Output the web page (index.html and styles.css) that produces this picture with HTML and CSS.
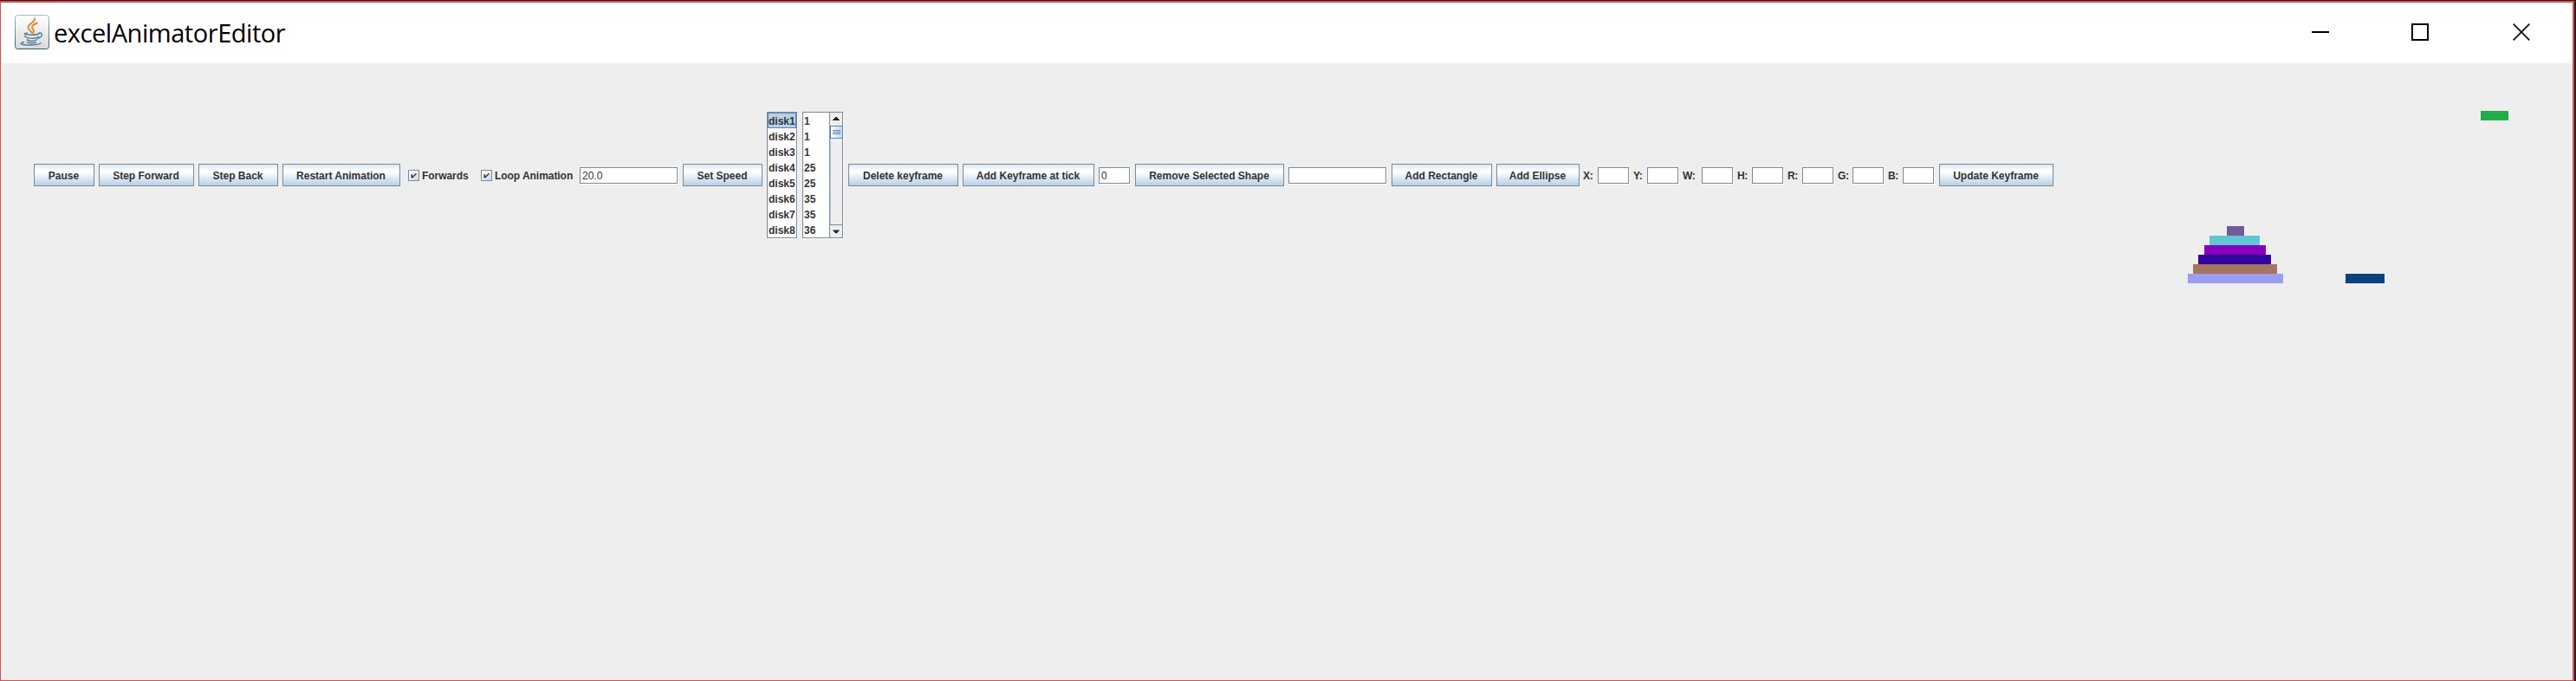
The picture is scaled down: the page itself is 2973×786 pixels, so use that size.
FILE: index.html
```
<!DOCTYPE html>
<html lang="en">
<head>
<meta charset="utf-8">
<title>excelAnimatorEditor</title>
<link rel="stylesheet" href="styles.css">
</head>
<body>
<div class="window">
  <header class="titlebar">
    <svg class="logo" width="40" height="40" viewBox="0 0 40 40" fill="none">
      <defs><linearGradient id="lg" x1="0" y1="0" x2="0" y2="1"><stop offset="0" stop-color="#fff"/><stop offset="1" stop-color="#d9dadb"/></linearGradient>
      <linearGradient id="ls" x1="0" y1="0" x2="0" y2="1"><stop offset="0" stop-color="#a3b8c8"/><stop offset="1" stop-color="#37596f"/></linearGradient></defs>
      <rect x=".5" y=".5" width="39" height="39" rx="3" fill="url(#lg)" stroke="url(#ls)"/>
      <path d="M23 3.500c2 5-8 7-7.500 11 .3 3 3.500 4 4.500 7M26.500 9.500c-7 2-7.500 4.500-5.500 7 1.500 2 1 3.500 0 5" stroke="#e8862e" stroke-width="1.900"/>
      <path d="M15 21c-6 1-5 2.200 4 2.200 5 0 8-.6 9-1.200M11.500 24c0 4 15 4 16 1M14 28.500c2 2.500 9 2.500 12 0M27 21.500c6-2 6 4-1 6M11 31.500c-8 2-2 3.500 6 3.500 8 0 13-1 13-3M14 32c3 .8 8 .8 11 0" stroke="#5b7f9b" stroke-width="1.500"/>
    </svg>
    <h1 class="title">excelAnimatorEditor</h1>
    <div class="controls">
      <svg width="20" height="20" viewBox="0 0 20 20"><path d="M0 10h20" stroke="#000" stroke-width="2"/></svg>
      <svg width="20" height="20" viewBox="0 0 20 20"><rect x="1" y="1" width="18" height="18" fill="none" stroke="#000" stroke-width="2"/></svg>
      <svg class="close" width="20" height="20" viewBox="0 0 20 20"><path d="M.7.7l18.600 18.600M19.300.7L.7 19.300" stroke="#111" stroke-width="1.800"/></svg>
    </div>
  </header>
  <main class="content">
    <div class="toolbar">
      <button class="btn w70">Pause</button>
      <button class="btn w110">Step Forward</button>
      <button class="btn w92">Step Back</button>
      <button class="btn w136">Restart Animation</button>
      <label class="check forwards"><svg class="box" width="13" height="13" viewBox="0 0 13 13"><path d="M3 5h2v3l4-4.500h1V5L5 10H3z" fill="#333"/></svg>Forwards</label>
      <label class="check loop"><svg class="box" width="13" height="13" viewBox="0 0 13 13"><path d="M3 5h2v3l4-4.500h1V5L5 10H3z" fill="#333"/></svg>Loop Animation</label>
      <div class="field wide">20.0</div>
      <button class="btn w92">Set Speed</button>
      <ul class="list shapes"><li class="selected">disk1</li><li>disk2</li><li>disk3</li><li>disk4</li><li>disk5</li><li>disk6</li><li>disk7</li><li>disk8</li></ul>
      <div class="list frames">
        <ul class="ticks"><li>1</li><li>1</li><li>1</li><li>25</li><li>25</li><li>35</li><li>35</li><li>36</li></ul>
        <div class="scroll">
          <svg class="arrow" width="14" height="15" viewBox="0 0 14 15"><path d="M3 9h8v-1h-1v-1h-1v-1h-1v-1h-2v1h-1v1h-1v1h-1z" fill="#222"/></svg>
          <div class="track"><div class="thumb"><i></i><i></i><i></i></div></div>
          <svg class="arrow down" width="14" height="15" viewBox="0 0 14 15"><path d="M3 6h8v1h-1v1h-1v1h-1v1h-2v-1h-1v-1h-1v-1h-1z" fill="#222"/></svg>
        </div>
      </div>
      <button class="btn w127">Delete keyframe</button>
      <button class="btn w152">Add Keyframe at tick</button>
      <div class="field">0</div>
      <button class="btn w172">Remove Selected Shape</button>
      <div class="field wide"></div>
      <button class="btn w116">Add Rectangle</button>
      <button class="btn w96">Add Ellipse</button>
      <span class="lbl">X:</span><div class="field"></div>
      <span class="lbl y">Y:</span><div class="field"></div>
      <span class="lbl w">W:</span><div class="field"></div>
      <span class="lbl">H:</span><div class="field"></div>
      <span class="lbl">R:</span><div class="field"></div>
      <span class="lbl">G:</span><div class="field"></div>
      <span class="lbl">B:</span><div class="field"></div>
      <button class="btn w132">Update Keyframe</button>
    </div>
    <svg class="canvas" width="480" height="240" viewBox="2480 110 480 240" shape-rendering="crispEdges">
      <rect x="2863" y="128" width="32" height="11" fill="#22ad4a"/>
      <rect x="2570" y="261" width="20" height="11" fill="#71599a"/>
      <rect x="2550" y="272" width="58" height="11" fill="#60c6d2"/>
      <rect x="2544" y="283" width="71" height="11" fill="#8700bd"/>
      <rect x="2537" y="294" width="84" height="11" fill="#32069d"/>
      <rect x="2531" y="305" width="97" height="11" fill="#a6755f"/>
      <rect x="2525" y="316" width="110" height="11" fill="#9b9df0"/>
      <rect x="2707" y="316" width="45" height="11" fill="#084280"/>
    </svg>
  </main>
</div>
</body>
</html>
```
FILE: styles.css
```
* { box-sizing: border-box; }
body { margin: 0; height: 786px; background: #222; overflow: hidden; display: flex; align-items: flex-end; }
ul { margin: 0; padding: 0; list-style: none; }
.window {
  width: 2971px; height: 785px; flex: none;
  border: solid #d25055; border-width: 2px 2px 1px 1px;
  background: #eee; display: flex; flex-direction: column;
}
.titlebar { height: 70px; background: #fff; display: flex; align-items: flex-start; padding: 14px 49px 0 16px; }
.title { margin: 1px 0 0 5px; font: 400 29px/40px "Open Sans", "Noto Sans", sans-serif; color: #000; letter-spacing: -.45px; }
.controls { margin-left: auto; display: flex; gap: 95px; padding-top: 10px; }
.close { margin-left: 2px; }
.content { display: flex; align-items: flex-start; padding: 37px 0 0 38px; }
.toolbar {
  width: 2331px; height: 184px; display: flex; align-items: center; gap: 5px;
  font: bold 12px/16px "Liberation Sans", Arial, sans-serif; color: #333;
}
.toolbar > * { flex: none; }
.btn {
  height: 26px; padding: 1px 1px 0 0; border: 1px solid #7a8a99; border-radius: 0;
  background: linear-gradient(#dde8f3 0%, #fff 30%, #fff 35%, #b8cfe5 100%);
  font: inherit; color: inherit; white-space: nowrap;
}
.w70 { width: 70px; }
.w92 { width: 92px; }
.w96 { width: 96px; }
.w110 { width: 110px; }
.w116 { width: 116px; }
.w127 { width: 127px; }
.w132 { width: 132px; }
.w136 { width: 136px; }
.w152 { width: 152px; }
.w172 { width: 172px; }
.check { display: flex; align-items: center; gap: 3px; padding: 1px 0 0 4px; white-space: nowrap; letter-spacing: -.05px; }
.forwards { width: 79px; }
.loop { width: 113px; }
.box { border: 1px solid #7a8a99; background: linear-gradient(135deg, #fff, #c6d9eb); overflow: visible; }
.field {
  width: 36px; height: 19px; margin-right: 1px; padding: 1px 0 0 2px; background: #fff;
  border: 1px solid #7a8a99; box-shadow: 1px 1px #fff;
  font-weight: 400; line-height: 17px;
}
.wide { width: 113px; }
.lbl { width: 11px; padding-top: 1px; white-space: nowrap; text-indent: -1px; letter-spacing: -.3px; }
.y { width: 10px; }
.w { width: 16px; }
.list { height: 146px; border: 1px solid #7a8a99; background: #fff; box-shadow: 1px 1px #fff; margin-right: 1px; }
.shapes { width: 35px; }
.list li { height: 18px; padding: 1px 0 0 1px; line-height: 18px; }
.list .selected { background: #b8cfe5; border: 1px solid #6382bf; padding: 0; line-height: 18px; }
.frames { width: 47px; display: flex; }
.ticks { width: 30px; }
.scroll { width: 15px; border-left: 1px solid #7a8a99; display: flex; flex-direction: column; }
.arrow { background: #eee; }
.down { border-top: 1px solid #7a8a99; }
.track { flex: 1; background: #eee; border-left: 1px solid #b8cfe5; }
.thumb {
  width: 15px; height: 15px; margin-left: -1px; border: 1px solid #6382bf; background: linear-gradient(90deg, #fff, #c1d5e9);
  display: flex; flex-direction: column; justify-content: center; gap: 1px; padding-left: 2px;
}
.thumb i { width: 9px; height: 1px; background: #6382bf; }
.canvas { margin-left: 110px; flex: none; }
```
